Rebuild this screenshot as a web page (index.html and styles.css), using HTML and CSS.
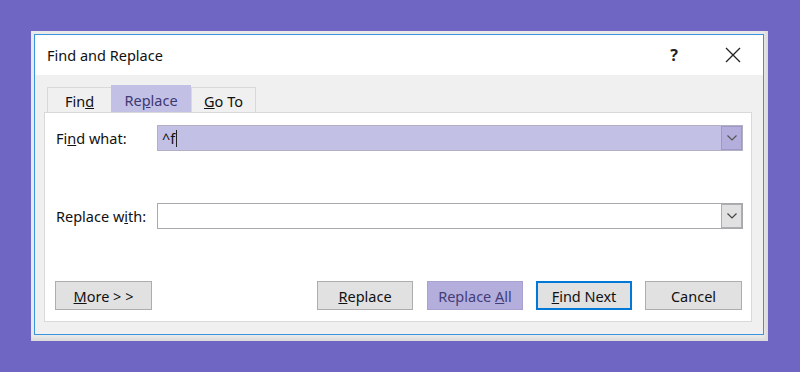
FILE: index.html
```html
<!DOCTYPE html>
<html lang="en">
<head>
  <meta charset="UTF-8" />
  <title>Find and Replace</title>
  <link rel="stylesheet" href="styles.css">
</head>
<body>
  <div class="frame">
    <div class="dialog">
      <div class="titlebar">
        <span class="title">Find and Replace</span>
        <span class="help">?</span>
        <svg class="close" width="16" height="16" viewBox="0 0 16 16">
          <path d="M1 1 L15 15 M15 1 L1 15" stroke="#222" stroke-width="1.3" fill="none"/>
        </svg>
      </div>

      <div class="body">
        <div class="tabs">
          <div class="tab">Fin<u>d</u></div>
          <div class="tab active">Re<u>p</u>lace</div>
          <div class="tab"><u>G</u>o To</div>
        </div>

        <div class="panel">
          <div class="row">
            <label class="label">Fi<u>n</u>d what:</label>
            <div class="combo combo-hl">
              <span class="value">^f<span class="caret"></span></span>
              <span class="drop">
                <svg width="12" height="8" viewBox="0 0 12 8"><path d="M1.5 1.5 L6 6 L10.5 1.5" stroke="#555" stroke-width="1.2" fill="none"/></svg>
              </span>
            </div>
          </div>

          <div class="row row-gap">
            <label class="label">Replace w<u>i</u>th:</label>
            <div class="combo">
              <span class="value"></span>
              <span class="drop">
                <svg width="12" height="8" viewBox="0 0 12 8"><path d="M1.5 1.5 L6 6 L10.5 1.5" stroke="#444" stroke-width="1.2" fill="none"/></svg>
              </span>
            </div>
          </div>

          <div class="buttons">
            <button class="btn btn-more"><u>M</u>ore &gt; &gt;</button>
            <div class="btn-group">
              <button class="btn btn-first"><u>R</u>eplace</button>
              <button class="btn btn-hl">Replace <u>A</u>ll</button>
              <button class="btn btn-default"><u>F</u>ind Next</button>
              <button class="btn btn-last">Cancel</button>
            </div>
          </div>
        </div>
      </div>
    </div>
  </div>
</body>
</html>
```

FILE: styles.css
```css
:root {
  --bg: #6e66c2;
  --face: #f0f0f0;
  --line: #d9d9d9;
  --btn: #e1e1e1;
  --btn-line: #adadad;
  --hl: #c3c0e6;
  --hl-dark: #b3aedb;
  --blue: #3c95dc;
  --text: #111;
}

body {
  margin: 0;
  background: var(--bg);
  font-family: "Noto Sans", "Open Sans", sans-serif;
  font-size: 14.5px;
  color: var(--text);
}

.frame {
  margin: 31px 0 0 31px;
  width: 737px;
  height: 310px;
  box-sizing: border-box;
  padding: 3px 4px 6px 3px;
  background: #e9e9e9;
  box-shadow: inset -3px -3px 3px rgba(0,0,0,0.06);
}

.dialog {
  height: 100%;
  box-sizing: border-box;
  border: 1px solid var(--blue);
  display: flex;
  flex-direction: column;
  background: #fff;
}

.titlebar {
  height: 40px;
  display: flex;
  align-items: center;
  padding-left: 12px;
  background: #fff;
}

.title {
  flex: 1;
  font-size: 14.5px;
}

.help {
  font-size: 16px;
  font-weight: bold;
  color: #222;
  margin-right: 47px;
}

.close {
  margin-right: 22px;
}

.body {
  flex: 1;
  background: var(--face);
  padding: 10px 11px 12px 9px;
  display: flex;
  flex-direction: column;
}

.tabs {
  display: flex;
  align-items: flex-end;
  height: 27px;
  padding-left: 3px;
}

.tab {
  height: 25px;
  box-sizing: border-box;
  border: 1px solid var(--line);
  border-bottom: none;
  display: flex;
  align-items: center;
  justify-content: center;
  width: 65px;
  padding-top: 2px;
}

.tab.active {
  height: 27px;
  width: 80px;
  background: var(--hl);
  border-color: var(--hl);
  color: #3e3872;
}

.tab + .tab {
  margin-left: -1px;
}

.tab.active + .tab {
  margin-left: 0;
}

.panel {
  flex: 1;
  background: #fff;
  border: 1px solid var(--line);
  padding: 12px 8px 11px 11px;
  display: flex;
  flex-direction: column;
}

.row {
  display: flex;
  align-items: center;
  height: 26px;
}

.row-gap {
  margin-top: 52px;
}

.label {
  width: 101px;
  flex: none;
}

.combo {
  flex: 1;
  height: 26px;
  box-sizing: border-box;
  border: 1px solid #a9a9ad;
  background: #fff;
  display: flex;
  align-items: stretch;
}

.combo-hl {
  background: var(--hl);
  border-color: #b2b0c2;
}

.value {
  flex: 1;
  padding-left: 4px;
  display: flex;
  align-items: center;
}

.caret {
  display: inline-block;
  width: 1px;
  height: 17px;
  background: #222;
  margin-left: 1px;
}

.drop {
  width: 21px;
  box-sizing: border-box;
  border: 1px solid var(--btn-line);
  background: var(--btn);
  display: flex;
  align-items: center;
  justify-content: center;
}

.combo-hl .drop {
  background: var(--hl-dark);
  border-color: #9d98c6;
}

.buttons {
  margin-top: 52px;
  display: flex;
  height: 29px;
}

.btn-group {
  margin-left: auto;
  margin-right: 1px;
  display: flex;
  gap: 13px;
}

.btn {
  width: 96px;
  height: 29px;
  box-sizing: border-box;
  border: 1px solid var(--btn-line);
  background: var(--btn);
  font-family: inherit;
  font-size: 14.5px;
  color: var(--text);
  padding: 0;
}

.btn-more {
  margin-left: -1px;
  width: 97px;
}

.btn-first {
  margin-right: 1px;
}

.btn-last {
  width: 97px;
}

.btn-hl {
  background: var(--hl-dark);
  border-color: #a7a2cf;
  color: #433d7a;
}

.btn-default {
  border: 2px solid #0078d7;
}
```
